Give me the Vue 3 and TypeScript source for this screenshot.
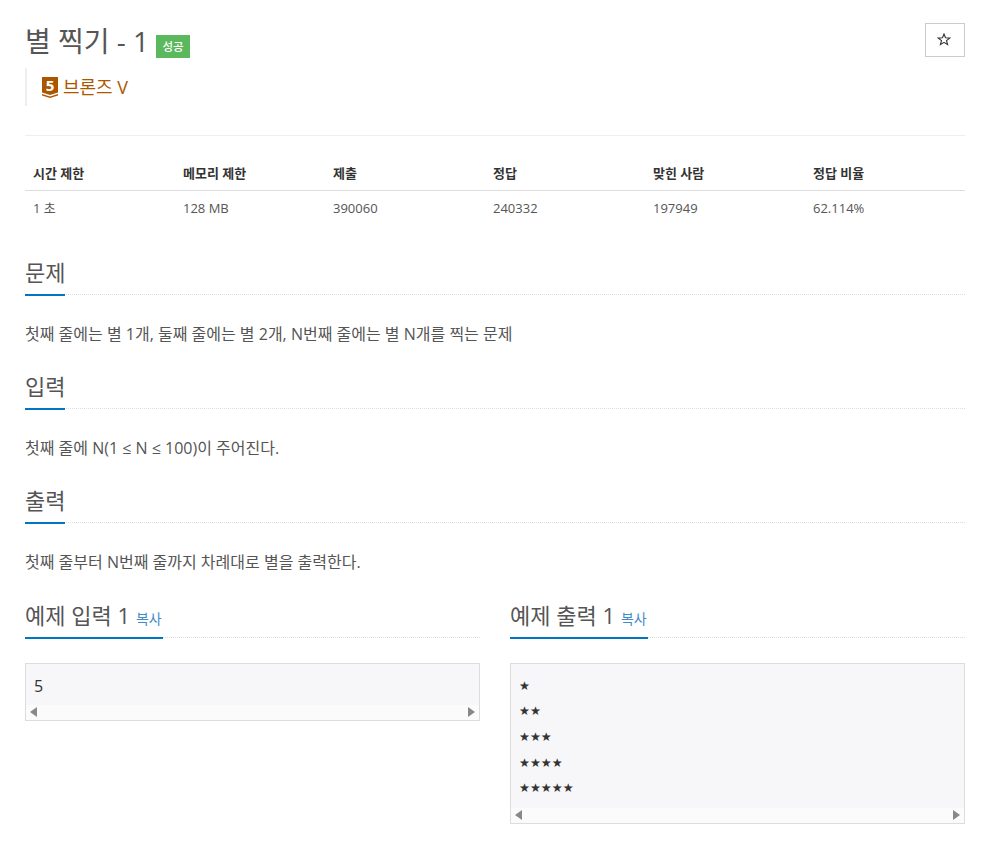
<script setup lang="ts">
const heads = ['시간 제한', '메모리 제한', '제출', '정답', '맞힌 사람', '정답 비율']
const vals = ['1 초', '128 MB', '390060', '240332', '197949', '62.114%']
const widths = [150, 150, 160, 160, 160, 160]
const sections = [
  { t: '문제', p: '첫째 줄에는 별 1개, 둘째 줄에는 별 2개, N번째 줄에는 별 N개를 찍는 문제' },
  { t: '입력', p: '첫째 줄에 N(1 ≤ N ≤ 100)이 주어진다.' },
  { t: '출력', p: '첫째 줄부터 N번째 줄까지 차례대로 별을 출력한다.' },
]
const samples = [
  { t: '예제 입력 1', lines: ['5'], star: false },
  { t: '예제 출력 1', lines: ['★', '★★', '★★★', '★★★★', '★★★★★'], star: true },
]
</script>

<template>
  <div class="page">
    <div class="top">
      <div class="title-row">
        <span class="title">별 찍기 - 1</span>
        <span class="label">성공</span>
      </div>
      <button class="star-btn" aria-label="star">
        <svg width="14" height="13" viewBox="0 0 14 13"><path d="M7 1l1.5 3.7 4.2.3-3.2 2.6 1.1 4-3.6-2.2-3.6 2.2 1.1-4-3.2-2.6 4.2-.3z" fill="none" stroke="#333" stroke-width="1.1"/></svg>
      </button>
    </div>
    <div class="tier">
      <svg class="tier-icon" width="16" height="24" viewBox="0 -3 16 24">
        <path d="M0 0h16v15.5l-8 2.5-8-2.5z" fill="#ad5600"/>
        <path d="M0 17l8 2.5 8-2.5v1.6l-8 2.4-8-2.4z" fill="#ad5600"/>
        <text x="8" y="13.5" text-anchor="middle" class="tier-num">5</text>
      </svg>
      <span class="tier-name">브론즈 V</span>
    </div>
    <div class="rule"></div>
    <div class="table">
      <div class="row head">
        <div v-for="(h, i) in heads" :key="h" class="cell" :style="{ width: widths[i] + 'px' }">{{ h }}</div>
      </div>
      <div class="row body">
        <div v-for="(v, i) in vals" :key="v" class="cell" :style="{ width: widths[i] + 'px' }">{{ v }}</div>
      </div>
    </div>
    <section v-for="s in sections" :key="s.t" class="section">
      <div class="headline"><h2>{{ s.t }}</h2></div>
      <p>{{ s.p }}</p>
    </section>
    <div class="samples">
      <div v-for="s in samples" :key="s.t" class="sample">
        <div class="headline"><h2>{{ s.t }}<a class="copy">복사</a></h2></div>
        <div class="pre">
          <div class="pre-text" :class="{ stars: s.star }">
            <div v-for="(l, i) in s.lines" :key="i" class="line">{{ l }}</div>
          </div>
          <div class="bar">
            <i class="arrow left"></i>
            <i class="arrow right"></i>
          </div>
        </div>
      </div>
    </div>
  </div>
</template>

<style>
html, body { background: #fff; }
</style>

<style scoped>
.page {
  box-sizing: border-box;
  width: 991px;
  height: 841px;
  overflow: hidden;
  padding: 23px 26px 0 25px;
  font-family: "Open Sans", "Noto Sans CJK KR", sans-serif;
  font-size: 14px;
  color: #555;
}
.top { display: flex; justify-content: space-between; align-items: flex-start; height: 45px; }
.title-row { display: flex; align-items: flex-start; }
.title { font-size: 28px; line-height: 36px; color: #555; font-weight: 400; }
.label {
  margin: 12px 0 0 7px;
  width: 34px;
  height: 23px;
  background: #5cb85c;
  color: #fff;
  font-size: 11.5px;
  line-height: 23px;
  text-align: center;
  font-weight: 500;
}
.star-btn {
  box-sizing: border-box;
  width: 40px;
  height: 34px;
  padding: 0 2px 2px 0;
  display: flex;
  align-items: center;
  justify-content: center;
  background: #fff;
  border: 1px solid #ccc;
}
.tier {
  box-sizing: border-box;
  height: 38px;
  border-left: 2px solid #eee;
  padding-left: 15px;
  display: flex;
  align-items: center;
  gap: 5px;
}
.tier-icon { display: block; margin-top: -3px; }
.tier-num { font: 700 15px "Open Sans", sans-serif; fill: #fff; }
.tier-name { font-size: 18px; line-height: 24px; color: #ad5600; }
.rule { height: 1px; background: #eee; margin-top: 29px; }
.table { margin-top: 18px; }
.row { display: flex; }
.cell { box-sizing: border-box; padding: 0 8px; }
.head { height: 36px; line-height: 38px; border-bottom: 1px solid #ddd; font-weight: 700; font-size: 13px; color: #333; }
.body { height: 35px; line-height: 35px; font-size: 13px; color: #555; }
.section { height: 114px; }
.section:first-of-type { margin-top: 27px; }
.headline { height: 41px; border-bottom: 1px dotted #ddd; position: relative; box-sizing: content-box; }
h2 {
  margin: 0;
  display: inline-block;
  height: 41px;
  line-height: 39px;
  font-size: 22px;
  font-weight: 400;
  color: #555;
  border-bottom: 2px solid #0076c0;
  min-width: 40px;
}
.section h2 { width: 40px; white-space: nowrap; }
p { margin: 0; padding-top: 27px; font-size: 16px; line-height: 24px; color: #555; }
.samples { display: flex; gap: 30px; margin-top: 1px; }
.sample { width: 455px; }
.sample h2 { width: 138px; white-space: nowrap; }
.copy { font-size: 14px; color: #428bca; margin-left: 6px; }
.pre { margin-top: 25px; border: 1px solid #ddd; background: #f7f7f9; }
.pre-text { padding: 9.5px 9px 6px 8px; font-size: 16px; line-height: 25.7px; color: #333; }
.pre-text.stars { font-family: "DejaVu Sans", sans-serif; font-size: 12.2px; padding-left: 8px; }
.line { height: 25.7px; }
.bar { height: 15px; background: #fbfbfb; position: relative; }
.arrow { position: absolute; top: 2px; width: 0; height: 0; border-top: 5px solid transparent; border-bottom: 5px solid transparent; }
.arrow.left { left: 4px; border-right: 7px solid #888; }
.arrow.right { right: 4px; border-left: 7px solid #888; }
</style>
